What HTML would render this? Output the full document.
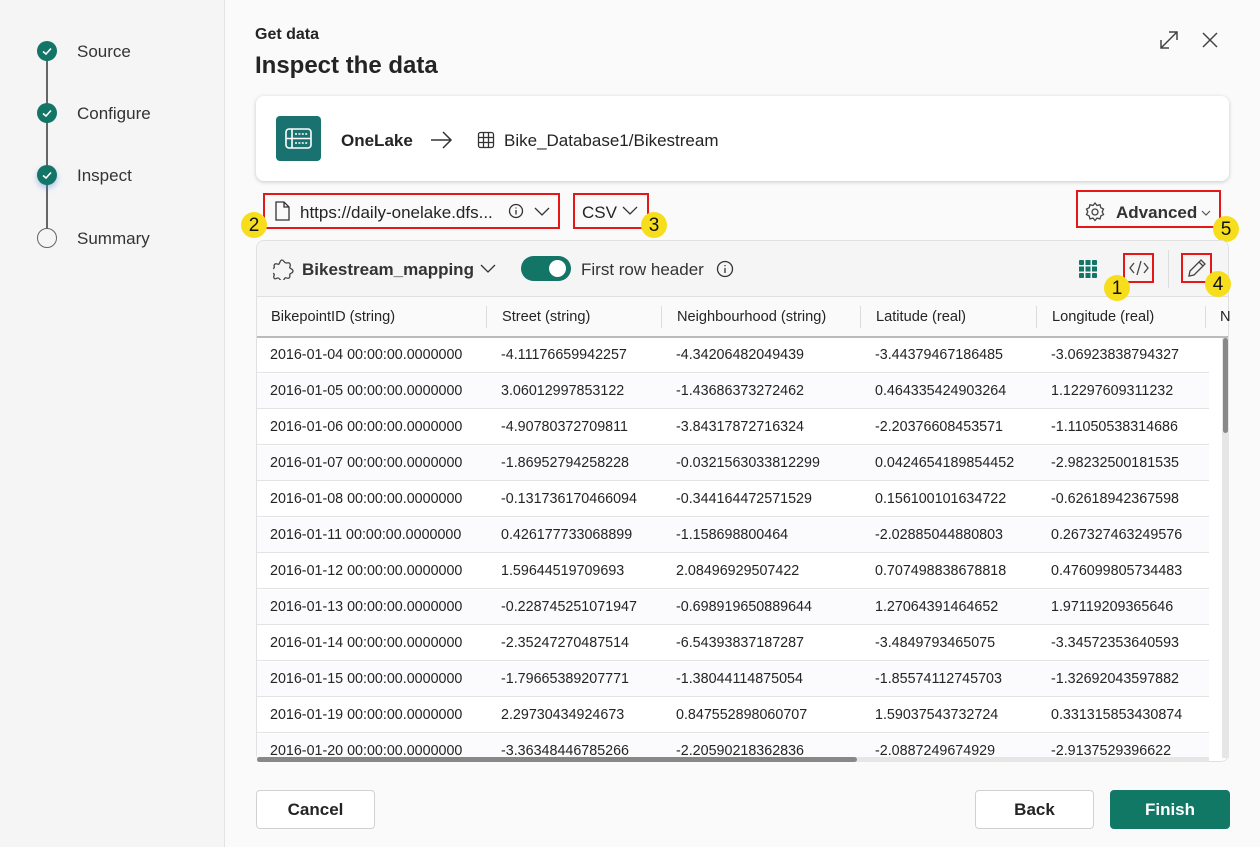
<!DOCTYPE html>
<html><head><meta charset="utf-8"><style>
*{box-sizing:border-box;margin:0;padding:0}
body{width:1260px;height:847px;overflow:hidden;background:#fafafa;font-family:"Liberation Sans",sans-serif;color:#242424;position:relative}
.abs{position:absolute}
.side{left:0;top:0;width:225px;height:847px;background:#f5f5f5;border-right:1px solid #e3e3e3}
.step{position:absolute;left:77px;font-size:17px;color:#333}
.dot{position:absolute;left:37px;width:20px;height:20px;border-radius:50%;background:#127566}
.line{position:absolute;left:46px;width:2px;background:#666}
.red{position:absolute;border:2px solid #e41818}
.badge{position:absolute;width:26px;height:26px;border-radius:50%;background:#f7de1c;font-size:19px;text-align:center;line-height:27px;color:#111}
.cell{position:absolute;font-size:14.3px;color:#242424;white-space:nowrap}
.hd{font-size:14.6px}
.btn{position:absolute;height:39px;border:1px solid #d1d1d1;border-radius:4px;background:#fff;font-size:17px;font-weight:bold;text-align:center;line-height:37px}
</style></head><body>
<div class="abs side"></div>
<div class="line" style="top:52px;height:188px"></div>
<div class="dot" style="top:41px"></div><div class="dot" style="top:103px"></div><div class="dot" style="top:165px;box-shadow:0 3px 6px rgba(60,120,220,.4)"></div>
<div class="dot" style="top:228px;background:#f5f5f5;border:1.5px solid #666"></div>
<svg class="abs" style="left:37px;top:41px" width="20" height="210"><g fill="none" stroke="#fff" stroke-width="1.6"><path d="M6 10.5l3 2.5 5-5.5"/><path d="M6 72.5l3 2.5 5-5.5"/><path d="M6 134.5l3 2.5 5-5.5"/></g></svg>
<div class="step" style="top:42px">Source</div>
<div class="step" style="top:104px">Configure</div>
<div class="step" style="top:166px">Inspect</div>
<div class="step" style="top:229px">Summary</div>

<div class="abs" style="left:255px;top:26px;font-size:16px;font-weight:bold">Get data</div>
<div class="abs" style="left:255px;top:52px;font-size:24px;font-weight:bold">Inspect the data</div>
<svg class="abs" style="left:1158px;top:28px" width="64" height="24" fill="none" stroke="#444" stroke-width="1.5"><path d="M3 20L19 4M11 4h8v8M3 12v8h8"/><path d="M45 5l14 14M59 5L45 19"/></svg>

<div class="abs" style="left:256px;top:96px;width:973px;height:85px;background:#fff;border-radius:8px;box-shadow:0 1px 4px rgba(0,0,0,.2)"></div>
<div class="abs" style="left:276px;top:116px;width:45px;height:45px;background:#1a7270;border-radius:4px"></div>
<svg class="abs" style="left:285px;top:128px" width="27" height="22" fill="none" stroke="#fff" stroke-width="1.6"><rect x="1" y="1" width="25" height="19" rx="3"/><path d="M1 10.5h25M7 1v19"/><path d="M10 6h13M10 15h13" stroke-dasharray="2 1.4"/></svg>
<div class="abs" style="left:341px;top:131px;font-size:17px;font-weight:bold">OneLake</div>
<svg class="abs" style="left:430px;top:130px" width="24" height="20" fill="none" stroke="#333" stroke-width="1.5"><path d="M1 10h20M13 2l8 8-8 8"/></svg>
<svg class="abs" style="left:477px;top:131px" width="18" height="18" fill="none" stroke="#333" stroke-width="1.3"><rect x="1.5" y="1.5" width="15" height="15" rx="2"/><path d="M1.5 6.5h15M1.5 11.5h15M6.5 1.5v15M11.5 1.5v15"/></svg>
<div class="abs" style="left:504px;top:131px;font-size:17px">Bike_Database1/Bikestream</div>

<div class="red" style="left:263px;top:193px;width:297px;height:36px"></div>
<svg class="abs" style="left:274px;top:201px" width="16" height="20" fill="none" stroke="#333" stroke-width="1.3"><path d="M2 1h8l5 5v13H2z M10 1v5h5"/></svg>
<div class="abs" style="left:300px;top:203px;font-size:17px">https://daily-onelake.dfs...</div>
<svg class="abs" style="left:508px;top:203px" width="44" height="16" fill="none" stroke="#333" stroke-width="1.3"><circle cx="8" cy="8" r="6.5"/><path d="M8 7v4.5M8 4.5v1"/><path d="M27 5l7 7 7-7"/></svg>
<div class="badge" style="left:241px;top:212px">2</div>
<div class="red" style="left:573px;top:193px;width:76px;height:36px"></div>
<div class="abs" style="left:582px;top:203px;font-size:17px">CSV</div>
<svg class="abs" style="left:620px;top:204px" width="20" height="14" fill="none" stroke="#333" stroke-width="1.3"><path d="M3 3l7 7 7-7"/></svg>
<div class="badge" style="left:641px;top:212px">3</div>
<div class="red" style="left:1076px;top:190px;width:145px;height:38px"></div>
<svg class="abs" style="left:1084px;top:201px" width="22" height="22" fill="none" stroke="#444" stroke-width="1.3"><circle cx="11" cy="11" r="3"/><path d="M11 2l2 2.5 3-.8.8 3 2.7 1.3-1.3 2.8 1.3 2.8-2.7 1.3-.8 3-3-.8-2 2.4-2-2.4-3 .8-.8-3-2.7-1.3 1.3-2.8-1.3-2.8 2.7-1.3.8-3 3 .8z"/></svg>
<div class="abs" style="left:1116px;top:203px;font-size:17px;font-weight:bold;color:#333">Advanced</div>
<svg class="abs" style="left:1200px;top:208px" width="12" height="10" fill="none" stroke="#555" stroke-width="1.2"><path d="M2 3l4 4 4-4"/></svg>
<div class="badge" style="left:1213px;top:216px">5</div>

<div class="abs" style="left:256px;top:240px;width:973px;height:522px;background:#fff;border:1px solid #e0e0e0;border-radius:8px;overflow:hidden">
 <div class="abs" style="left:0;top:0;width:973px;height:56px;background:#f5f5f5;border-bottom:1px solid #e0e0e0"></div>
 <div class="abs" style="left:0;top:56px;width:973px;height:41px;background:#fafafa;border-bottom:2px solid #bbb"></div>
</div>
<svg class="abs" style="left:273px;top:258px" width="22" height="22" fill="none" stroke="#444" stroke-width="1.3"><path d="M9 2c2 0 2 3 4 3s3-1 4 1-1 3 0 4 3 1 3 3-2 2-3 3 1 3-1 4-3-1-4 0-1 3-3 3-2-3-4-3-3 2-4 0 1-3 0-4-3-1-3-3 2-2 3-3-1-3 1-4 3 1 4 0 1-4 3-4z"/></svg>
<div class="abs" style="left:302px;top:260px;font-size:17px;font-weight:bold;color:#333">Bikestream_mapping</div>
<svg class="abs" style="left:478px;top:262px" width="20" height="14" fill="none" stroke="#333" stroke-width="1.3"><path d="M3 3l7 7 7-7"/></svg>
<div class="abs" style="left:521px;top:256px;width:50px;height:25px;border-radius:13px;background:#127566"></div>
<div class="abs" style="left:549px;top:260px;width:17px;height:17px;border-radius:50%;background:#fff"></div>
<div class="abs" style="left:581px;top:260px;font-size:17px;color:#333">First row header</div>
<svg class="abs" style="left:716px;top:260px" width="18" height="18" fill="none" stroke="#333" stroke-width="1.3"><circle cx="9" cy="9" r="7.5"/><path d="M9 8v5M9 5v1.3"/></svg>
<svg class="abs" style="left:1079px;top:260px" width="18" height="18"><g fill="#127566"><rect x="0" y="0" width="5" height="5" rx="1"/><rect x="6.5" y="0" width="5" height="5"/><rect x="13" y="0" width="5" height="5" rx="1"/><rect x="0" y="6.5" width="5" height="5"/><rect x="6.5" y="6.5" width="5" height="5"/><rect x="13" y="6.5" width="5" height="5"/><rect x="0" y="13" width="5" height="5" rx="1"/><rect x="6.5" y="13" width="5" height="5"/><rect x="13" y="13" width="5" height="5" rx="1"/></g></svg>
<div class="red" style="left:1123px;top:253px;width:31px;height:30px"></div>
<svg class="abs" style="left:1128px;top:259px" width="22" height="18" fill="none" stroke="#444" stroke-width="1.3"><path d="M6 4L2 9l4 5M16 4l4 5-4 5M13 2L9 16"/></svg>
<div class="badge" style="left:1104px;top:275px">1</div>
<div class="abs" style="left:1168px;top:250px;width:1px;height:38px;background:#ddd"></div>
<div class="red" style="left:1181px;top:253px;width:31px;height:30px"></div>
<svg class="abs" style="left:1186px;top:257px" width="22" height="22" fill="none" stroke="#444" stroke-width="1.3"><path d="M3 19l1-5L15 3l4 4L8 18z M13 5l4 4"/></svg>
<div class="badge" style="left:1205px;top:271px">4</div>

<div class="cell hd" style="left:271px;top:309px">BikepointID (string)</div>
<div class="cell hd" style="left:502px;top:309px">Street (string)</div>
<div class="cell hd" style="left:677px;top:309px">Neighbourhood (string)</div>
<div class="cell hd" style="left:876px;top:309px">Latitude (real)</div>
<div class="cell hd" style="left:1052px;top:309px">Longitude (real)</div>
<div class="cell hd" style="left:1220px;top:309px">N</div>
<div class="abs" style="left:486px;top:306px;width:1px;height:22px;background:#ddd"></div>
<div class="abs" style="left:661px;top:306px;width:1px;height:22px;background:#ddd"></div>
<div class="abs" style="left:860px;top:306px;width:1px;height:22px;background:#ddd"></div>
<div class="abs" style="left:1036px;top:306px;width:1px;height:22px;background:#ddd"></div>
<div class="abs" style="left:1205px;top:306px;width:1px;height:22px;background:#ddd"></div>

<div class="abs" style="left:257px;top:338px;width:952px;height:419px;overflow:hidden">
<div id="rows"></div>
</div>
<script>
var d=[["2016-01-04","-4.11176659942257","-4.34206482049439","-3.44379467186485","-3.06923838794327"],
["2016-01-05","3.06012997853122","-1.43686373272462","0.464335424903264","1.12297609311232"],
["2016-01-06","-4.90780372709811","-3.84317872716324","-2.20376608453571","-1.11050538314686"],
["2016-01-07","-1.86952794258228","-0.0321563033812299","0.0424654189854452","-2.98232500181535"],
["2016-01-08","-0.131736170466094","-0.344164472571529","0.156100101634722","-0.62618942367598"],
["2016-01-11","0.426177733068899","-1.158698800464","-2.02885044880803","0.267327463249576"],
["2016-01-12","1.59644519709693","2.08496929507422","0.707498838678818","0.476099805734483"],
["2016-01-13","-0.228745251071947","-0.698919650889644","1.27064391464652","1.97119209365646"],
["2016-01-14","-2.35247270487514","-6.54393837187287","-3.4849793465075","-3.34572353640593"],
["2016-01-15","-1.79665389207771","-1.38044114875054","-1.85574112745703","-1.32692043597882"],
["2016-01-19","2.29730434924673","0.847552898060707","1.59037543732724","0.331315853430874"],
["2016-01-20","-3.36348446785266","-2.20590218362836","-2.0887249674929","-2.9137529396622"]];
var x=[13,244,419,618,794],h="";
d.forEach(function(r,i){var t=i*36;h+='<div style="position:absolute;left:0;top:'+t+'px;width:952px;height:35px;background:'+(i%2?'#fbfbfd':'#fff')+';border-bottom:1px solid #e3e3e3"></div>';
r.forEach(function(c,j){h+='<div class="cell" style="left:'+x[j]+'px;top:'+(t+9)+'px">'+(j==0?c+' 00:00:00.0000000':c)+'</div>'})});
document.getElementById('rows').innerHTML=h;
</script>
<div class="abs" style="left:1222px;top:338px;width:7px;height:420px;background:#e6e6e6"></div>
<div class="abs" style="left:1223px;top:338px;width:5px;height:95px;background:#888;border-radius:3px"></div>
<div class="abs" style="left:257px;top:757px;width:952px;height:5px;background:#e6e6e6"></div>
<div class="abs" style="left:257px;top:757px;width:600px;height:5px;background:#888;border-radius:3px"></div>

<div class="btn" style="left:256px;top:790px;width:119px">Cancel</div>
<div class="btn" style="left:975px;top:790px;width:119px">Back</div>
<div class="btn" style="left:1110px;top:790px;width:120px;background:#127866;border-color:#127866;color:#fff">Finish</div>
</body></html>
